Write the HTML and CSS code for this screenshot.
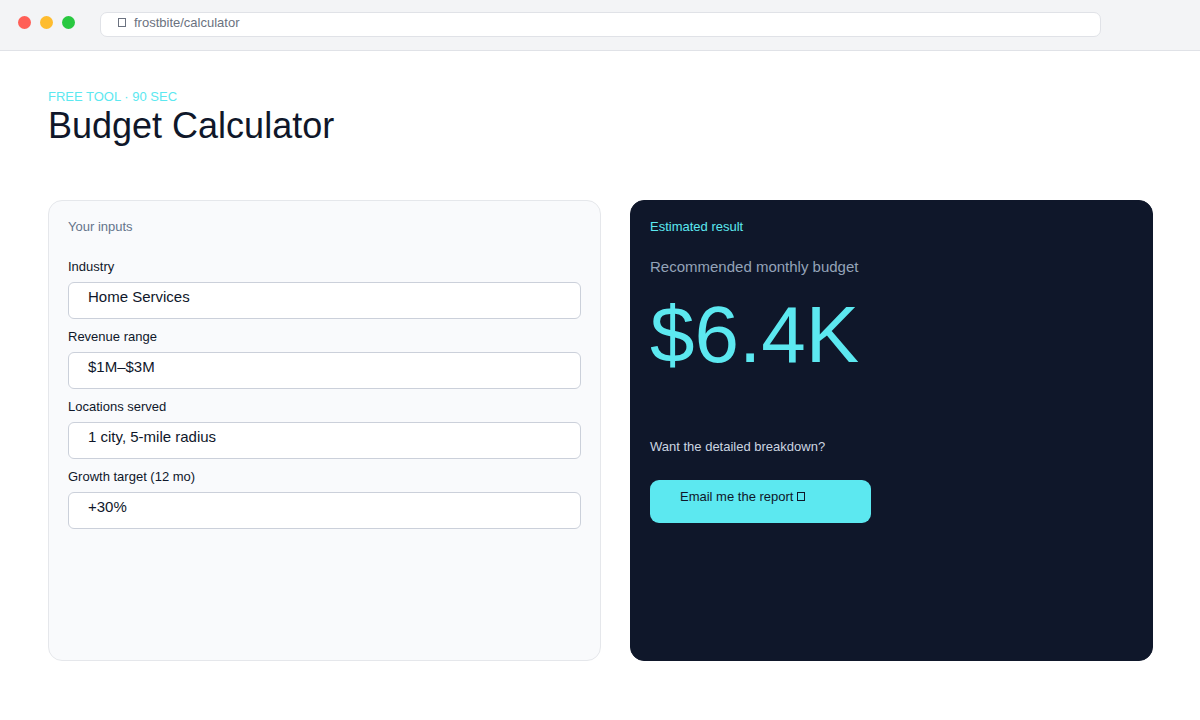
FILE: index.html
```
<!DOCTYPE html>
<html lang="en">
<head>
    <meta charset="UTF-8">
    <meta name="viewport" content="width=device-width, initial-scale=1.0">
    <title>Budget Calculator</title>
    <link rel="stylesheet" href="styles.css">
</head>
<body>
    <header class="browser-bar">
        <div class="dots">
            <span class="dot dot-red"></span>
            <span class="dot dot-yellow"></span>
            <span class="dot dot-green"></span>
        </div>
        <div class="address">
            <span class="glyph-box"></span>
            <span>frostbite/calculator</span>
        </div>
    </header>

    <main class="page">
        <div class="eyebrow">FREE TOOL · 90 SEC</div>
        <h1>Budget Calculator</h1>

        <div class="panels">
            <form class="panel inputs-panel">
                <h2 class="panel-title">Your inputs</h2>

                <div class="field">
                    <label for="industry">Industry</label>
                    <input type="text" id="industry" value="Home Services">
                </div>
                <div class="field">
                    <label for="revenue">Revenue range</label>
                    <input type="text" id="revenue" value="$1M–$3M">
                </div>
                <div class="field">
                    <label for="locations">Locations served</label>
                    <input type="text" id="locations" value="1 city, 5-mile radius">
                </div>
                <div class="field">
                    <label for="growth">Growth target (12 mo)</label>
                    <input type="text" id="growth" value="+30%">
                </div>
            </form>

            <section class="panel result-panel">
                <h2 class="panel-title">Estimated result</h2>
                <div class="result-label">Recommended monthly budget</div>
                <div class="result-value">$6.4K</div>
                <p class="result-prompt">Want the detailed breakdown?</p>
                <button type="button" class="report-button">
                    Email me the report
                    <span class="glyph-box"></span>
                </button>
            </section>
        </div>
    </main>
</body>
</html>
```
FILE: styles.css
```
* {
    box-sizing: border-box;
}

body {
    margin: 0;
    min-height: 100vh;
    display: flex;
    flex-direction: column;
    font-family: 'Liberation Sans', Arial, sans-serif;
    font-size: 13px;
    line-height: 16px;
    color: #0f172a;
    background-color: #fff;
}

/* Browser bar */
.browser-bar {
    display: flex;
    align-items: flex-start;
    padding: 12px 99px 13px 18px;
    background-color: #f3f4f6;
    border-bottom: 1px solid #e0e2e7;
}

.dots {
    display: flex;
    gap: 9px;
    width: 82px;
    padding-top: 4px;
}

.dot {
    width: 13px;
    height: 13px;
    border-radius: 50%;
}

.dot-red {
    background-color: #ff5f57;
}

.dot-yellow {
    background-color: #febc2e;
}

.dot-green {
    background-color: #28c840;
}

.address {
    flex: 1;
    display: flex;
    gap: 8px;
    padding: 2px 17px 5px;
    background-color: #fff;
    border: 1px solid #e0e2e7;
    border-radius: 7px;
    color: #6b7280;
}

.glyph-box {
    display: inline-block;
    width: 8px;
    height: 9px;
    border: 1px solid currentColor;
}

.address .glyph-box {
    margin-top: 3px;
}

/* Page */
.page {
    flex: 1;
    display: flex;
    flex-direction: column;
    padding: 38px 47px 59px 48px;
}

.eyebrow {
    color: #5ce8f0;
}

h1 {
    margin: 0 0 53px;
    font-size: 36px;
    font-weight: normal;
    line-height: 42px;
}

.panels {
    flex: 1;
    display: grid;
    grid-template-columns: 553fr 523fr;
    gap: 29px;
}

.panel {
    padding: 18px 19px;
    border: 1px solid #e5e7eb;
    border-radius: 14px;
}

.panel-title {
    margin: 0 0 24px;
    font-size: 13px;
    font-weight: normal;
}

.inputs-panel {
    background-color: #f9fafc;
}

.inputs-panel .panel-title {
    color: #64748b;
}

.field {
    margin-bottom: 10px;
}

.field label {
    display: block;
    margin-bottom: 7px;
}

.field input {
    display: block;
    width: 100%;
    height: 37px;
    padding: 4px 19px 13px;
    font-family: inherit;
    font-size: 15px;
    line-height: 18px;
    color: #0f172a;
    background-color: #fff;
    border: 1px solid #cbd0da;
    border-radius: 6px;
}

/* Result */
.result-panel {
    background-color: #0f172a;
    border-color: #0f172a;
}

.result-panel .panel-title {
    color: #5ce8f0;
}

.result-label {
    font-size: 15px;
    line-height: 16px;
    color: #94a3b8;
}

.result-value {
    margin: 14px 0 58px;
    font-size: 80px;
    line-height: 92px;
    color: #5ce8f0;
}

.result-prompt {
    margin: 0 0 25px;
    color: #cbd5e1;
}

.report-button {
    display: block;
    width: 221px;
    padding: 9px 30px 18px;
    font-family: inherit;
    font-size: 13px;
    line-height: 16px;
    text-align: left;
    color: #0f172a;
    background-color: #5ce8f0;
    border: none;
    border-radius: 9px;
    cursor: pointer;
}
```
